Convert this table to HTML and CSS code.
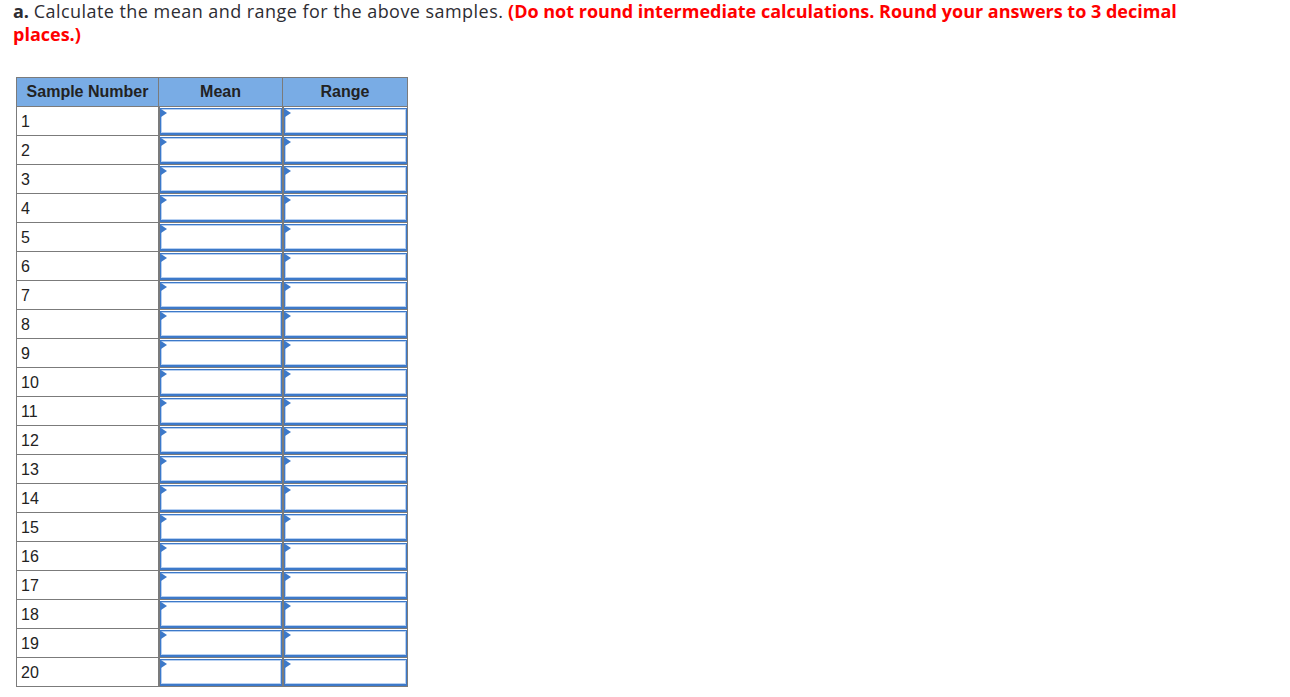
FILE: index.html
```html
<!DOCTYPE html>
<html>
<head>
<meta charset="utf-8">
<link rel="stylesheet" href="styles.css">
</head>
<body>
<div class="page">
  <p class="question"><b class="part">a.</b> <span class="lead">Calculate the mean and range for the above samples.</span> <span class="note">(Do not round intermediate calculations. Round your answers to 3 decimal places.)</span></p>
  <table class="grid">
    <thead>
      <tr><th class="c1">Sample Number</th><th class="c2">Mean</th><th class="c3">Range</th></tr>
    </thead>
    <tbody>
      <tr><td class="num">1</td><td class="in"><div class="box"></div></td><td class="in"><div class="box"></div></td></tr>
      <tr><td class="num">2</td><td class="in"><div class="box"></div></td><td class="in"><div class="box"></div></td></tr>
      <tr><td class="num">3</td><td class="in"><div class="box"></div></td><td class="in"><div class="box"></div></td></tr>
      <tr><td class="num">4</td><td class="in"><div class="box"></div></td><td class="in"><div class="box"></div></td></tr>
      <tr><td class="num">5</td><td class="in"><div class="box"></div></td><td class="in"><div class="box"></div></td></tr>
      <tr><td class="num">6</td><td class="in"><div class="box"></div></td><td class="in"><div class="box"></div></td></tr>
      <tr><td class="num">7</td><td class="in"><div class="box"></div></td><td class="in"><div class="box"></div></td></tr>
      <tr><td class="num">8</td><td class="in"><div class="box"></div></td><td class="in"><div class="box"></div></td></tr>
      <tr><td class="num">9</td><td class="in"><div class="box"></div></td><td class="in"><div class="box"></div></td></tr>
      <tr><td class="num">10</td><td class="in"><div class="box"></div></td><td class="in"><div class="box"></div></td></tr>
      <tr><td class="num">11</td><td class="in"><div class="box"></div></td><td class="in"><div class="box"></div></td></tr>
      <tr><td class="num">12</td><td class="in"><div class="box"></div></td><td class="in"><div class="box"></div></td></tr>
      <tr><td class="num">13</td><td class="in"><div class="box"></div></td><td class="in"><div class="box"></div></td></tr>
      <tr><td class="num">14</td><td class="in"><div class="box"></div></td><td class="in"><div class="box"></div></td></tr>
      <tr><td class="num">15</td><td class="in"><div class="box"></div></td><td class="in"><div class="box"></div></td></tr>
      <tr><td class="num">16</td><td class="in"><div class="box"></div></td><td class="in"><div class="box"></div></td></tr>
      <tr><td class="num">17</td><td class="in"><div class="box"></div></td><td class="in"><div class="box"></div></td></tr>
      <tr><td class="num">18</td><td class="in"><div class="box"></div></td><td class="in"><div class="box"></div></td></tr>
      <tr><td class="num">19</td><td class="in"><div class="box"></div></td><td class="in"><div class="box"></div></td></tr>
      <tr><td class="num">20</td><td class="in"><div class="box"></div></td><td class="in"><div class="box"></div></td></tr>
    </tbody>
  </table>
</div>
</body>
</html>
```
FILE: styles.css
```css
html, body {
  margin: 0;
  padding: 0;
  background: #ffffff;
}

.page {
  padding: 0 0 0 13px;
}

.question {
  margin: 0;
  width: 1190px;
  font-family: "Open Sans", "Liberation Sans", sans-serif;
  font-size: 18px;
  line-height: 23px;
  color: #2d2d33;
}

.part {
  font-weight: 700;
  color: #2d2d33;
}

.lead {
  letter-spacing: 0.45px;
}

.note {
  font-weight: 700;
  color: #ff0000;
}

.grid {
  margin: 31px 0 0 3px;
  border-collapse: collapse;
  border: 1px solid #7b7b7b;
  font-family: "Liberation Sans", Arial, sans-serif;
  font-size: 16px;
  line-height: 18px;
  color: #222222;
  table-layout: fixed;
}

.grid tr {
  height: 29px;
}

.grid th {
  background: #79ace5;
  font-weight: 700;
  padding: 0;
  text-align: center;
  vertical-align: middle;
  border: 1px solid #7b7b7b;
}

.grid .c1 { width: 141px; }
.grid .c2 { width: 123px; }
.grid .c3 { width: 124px; }

.grid td {
  padding: 0;
  border: 1px solid #7b7b7b;
}

.grid td.num {
  padding: 1px 0 0 4px;
  vertical-align: middle;
}

.grid td.in {
  border-left-width: 2px;
  padding: 1px 0 0 0;
  vertical-align: top;
}

.box {
  position: relative;
  height: 24px;
  border: 1px solid #3d79c9;
  border-bottom-width: 2px;
  box-shadow: inset 0 0 0 1px #b7d0f1;
}

.box::before {
  content: "";
  position: absolute;
  left: 0;
  top: 0;
  width: 0;
  height: 0;
  border-left: 6px solid #3d79c9;
  border-top: 4px solid transparent;
  border-bottom: 4px solid transparent;
}
```
